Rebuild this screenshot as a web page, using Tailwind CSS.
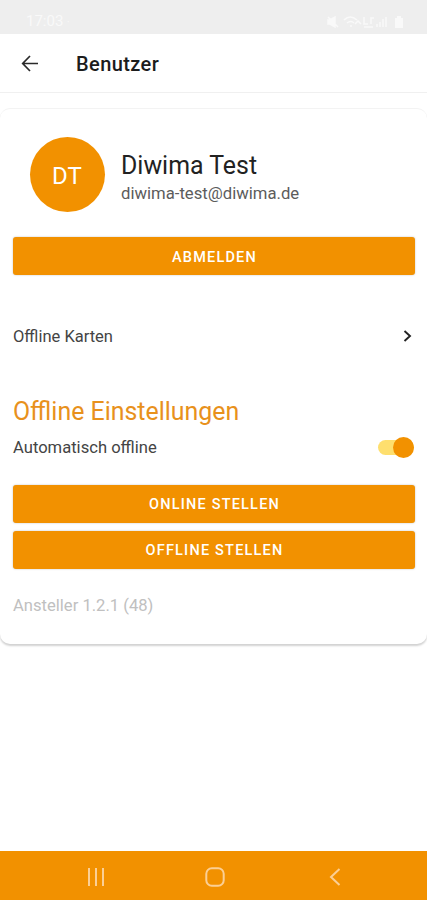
<!DOCTYPE html>
<html lang="de">
<head>
<meta charset="utf-8">
<title>Benutzer</title>
<script src="https://cdn.jsdelivr.net/npm/@tailwindcss/browser@4"></script>
</head>
<body class="bg-white">
<div class="flex h-[900px] w-[427px] flex-col overflow-hidden bg-white font-[Roboto,sans-serif] text-[#444]">
  <div class="flex h-[34px] shrink-0 items-center justify-between bg-[#eeeeee] pt-[9px] pr-[21px] pl-[26px] text-[#f9f9f9]">
    <span class="text-[15px] leading-5">17:03 <span class="text-[10px]">·</span></span>
    <svg class="h-[14px] w-[80px]" viewBox="0 0 80 14" fill="none" stroke="currentColor" stroke-width="1.5">
      <path d="M2 5h2l5-3v10L4 9H2zM2 2l10 10" fill="currentColor"/>
      <path d="M18 5q6-6 13 0M21 8q4-3 7 0M24 11h2M29 9l3-3 3 3" />
      <path d="M38 2v7h4M45 9V3h3M38 12h9M51 12V9M54 12V7M57 12V4M60 12V2" />
      <path d="M69 3h2V1h4v2h2v10h-8z" fill="currentColor" stroke="none"/>
    </svg>
  </div>
  <header class="flex h-[59px] shrink-0 items-center border-b border-[#f0f0f0] pl-[21px]">
    <svg class="h-[18px] w-[18px]" viewBox="0 0 18 18" fill="none" stroke="#2a2a2a" stroke-width="1.7"><path d="M17 9.500H2M9 2L1.700 9.500 9 17"/></svg>
    <h1 class="ml-[37px] pt-[2px] text-[20px] font-medium leading-6 tracking-[0.4px] text-[#1c1c1c]">Benutzer</h1>
  </header>
  <main class="mt-[15px] flex h-[536px] shrink-0 flex-col rounded-[10px] border-t border-[#f3f3f3] bg-white pr-[12px] pl-[13px] shadow-[0_2px_2px_rgba(0,0,0,0.18)]">
    <div class="mt-[28px] flex h-[75px] items-center pl-[17px]">
      <div class="flex size-[75px] items-center justify-center rounded-full bg-[#f29100] pt-[2px] pr-[1px] text-[24px] text-white">DT</div>
      <div class="ml-[16px] pt-[7px]">
        <div class="text-[24.9px] leading-[30px] text-[#222]">Diwima Test</div>
        <div class="text-[16.7px] leading-[25px] text-[#5c5c5c]">diwima-test@diwima.de</div>
      </div>
    </div>
    <button class="mt-[25px] h-[38px] shrink-0 rounded-[3px] bg-[#f29100] pt-[3px] pl-[1px] text-[14.5px] font-medium tracking-[1.2px] text-white shadow-[0_0_2px_rgba(0,0,0,0.25)]">ABMELDEN</button>
    <div class="mt-[49px] flex h-6 items-center justify-between text-[16.5px]">
      <span class="pt-[3px]">Offline Karten</span>
      <svg class="mr-[3px] h-[12px] w-[9px]" viewBox="0 0 9 12" fill="none" stroke="#222" stroke-width="1.9"><path d="M1.500 1l5.500 5-5.500 5"/></svg>
    </div>
    <h2 class="mt-[49px] text-[24.9px] leading-[30px] text-[#e8911c]">Offline Einstellungen</h2>
    <div class="mt-[8px] flex h-6 items-center justify-between text-[16.6px]">
      <span class="pt-[2px]">Automatisch offline</span>
      <div class="mr-[1px] flex h-[15px] w-[36px] items-center justify-end rounded-full bg-[#fedf6e]"><div class="size-[21px] rounded-full bg-[#f29100]"></div></div>
    </div>
    <button class="mt-[26px] h-[38px] shrink-0 rounded-[3px] bg-[#f29100] pt-[1px] pl-[1px] text-[14.5px] font-medium tracking-[1.2px] text-white shadow-[0_0_2px_rgba(0,0,0,0.25)]">ONLINE STELLEN</button>
    <button class="mt-[8px] h-[38px] shrink-0 rounded-[3px] bg-[#f29100] pt-[1px] pl-[1px] text-[14.5px] font-medium tracking-[1.2px] text-white shadow-[0_0_2px_rgba(0,0,0,0.25)]">OFFLINE STELLEN</button>
    <div class="mt-[25px] text-[16.6px] leading-6 text-[#c0c0c0]">Ansteller 1.2.1 (48)</div>
  </main>
  <nav class="mt-auto flex h-[49px] shrink-0 items-center justify-between bg-[#f29100] pt-[3px] pr-[86px] pl-[87px] text-[#fbcf95]">
    <svg class="h-[18px] w-[18px]" viewBox="0 0 18 18" fill="none" stroke="currentColor" stroke-width="2"><path d="M2 0v18M9 0v18M16 0v18"/></svg>
    <svg class="mr-[4px] h-[20px] w-[20px]" viewBox="0 0 20 20" fill="none" stroke="currentColor" stroke-width="2"><rect x="1.3" y="1.3" width="17.4" height="17.4" rx="5.5"/></svg>
    <svg class="h-[18px] w-[12px]" viewBox="0 0 12 18" fill="none" stroke="currentColor" stroke-width="2"><path d="M10.5 1L2 9l8.500 8"/></svg>
  </nav>
</div>
</body>
</html>
